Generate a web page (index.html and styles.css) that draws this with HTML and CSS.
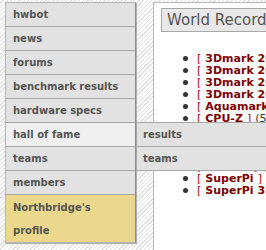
FILE: index.html
```html
<!DOCTYPE html>
<html>
<head>
<meta charset="utf-8">
<link rel="stylesheet" href="styles.css">
</head>
<body>
<div class="page">
  <nav class="menu">
    <a class="item">hwbot</a>
    <a class="item">news</a>
    <a class="item">forums</a>
    <a class="item">benchmark results</a>
    <a class="item">hardware specs</a>
    <div class="item active">hall of fame
      <div class="submenu">
        <a class="subitem">results</a>
        <a class="subitem">teams</a>
      </div>
    </div>
    <a class="item">teams</a>
    <a class="item">members</a>
    <a class="item profile">Northbridge's profile</a>
  </nav>
  <main class="panel">
    <h1 class="title">World Records</h1>
    <ul class="records">
      <li><span class="br">[</span> <a>3Dmark 2001</a> <span class="br">]</span> <span class="count">(5)</span></li>
      <li><span class="br">[</span> <a>3Dmark 2003</a> <span class="br">]</span> <span class="count">(5)</span></li>
      <li><span class="br">[</span> <a>3Dmark 2005</a> <span class="br">]</span> <span class="count">(5)</span></li>
      <li><span class="br">[</span> <a>3Dmark 2006</a> <span class="br">]</span> <span class="count">(5)</span></li>
      <li><span class="br">[</span> <a>Aquamark</a> <span class="br">]</span> <span class="count">(5)</span></li>
      <li><span class="br">[</span> <a>CPU-Z</a> <span class="br">]</span> <span class="count">(5)</span></li>
      <li><span class="br">[</span> <a>PCMark04</a> <span class="br">]</span> <span class="count">(5)</span></li>
      <li><span class="br">[</span> <a>PCMark05</a> <span class="br">]</span> <span class="count">(5)</span></li>
      <li><span class="br">[</span> <a>PiFast</a> <span class="br">]</span> <span class="count">(5)</span></li>
      <li><span class="br">[</span> <a>Sandra</a> <span class="br">]</span> <span class="count">(5)</span></li>
      <li><span class="br">[</span> <a>SuperPi</a> <span class="br">]</span> <span class="count">(5)</span></li>
      <li><span class="br">[</span> <a>SuperPi 32M</a> <span class="br">]</span> <span class="count">(5)</span></li>
    </ul>
  </main>
</div>
</body>
</html>
```
FILE: styles.css
```css
html, body {
  margin: 0;
  padding: 0;
}
body {
  width: 266px;
  height: 250px;
  overflow: hidden;
  background-color: #ffffff;
  background-image: repeating-linear-gradient(135deg, #ffffff 0px, #ffffff 2px, #e0e0e0 2px, #e0e0e0 3px);
  font-family: "DejaVu Sans", Verdana, sans-serif;
}
.page {
  display: flex;
  align-items: flex-start;
  padding: 2px 0 0 5px;
  gap: 17px;
  height: 248px;
}
.menu {
  flex: none;
  width: 129px;
  display: flex;
  flex-direction: column;
  border: 1px solid #b4b4b4;
  border-right: 1px solid #8c8c8c;
  box-shadow: 1px 1px 0 #b0b0b0;
  background: #e2e2e2;
}
.item {
  position: relative;
  display: block;
  height: 23px;
  line-height: 24px;
  padding-left: 7px;
  border-bottom: 1px solid #a8a8a8;
  font-size: 10px;
  font-weight: bold;
  color: #555555;
  white-space: nowrap;
}
.item.active {
  background: #f0f0f0;
}
.item.profile {
  height: auto;
  white-space: normal;
  border-bottom: none;
  background: #ecd88c;
  padding-right: 30px;
  padding-top: 1px;
  line-height: 23px;
}
.submenu {
  position: absolute;
  left: 130px;
  top: -1px;
  width: 140px;
  display: flex;
  flex-direction: column;
  background: #e2e2e2;
  border-top: 1px solid #a8a8a8;
  border-left: 1px solid #a8a8a8;
}
.subitem {
  display: block;
  height: 23px;
  line-height: 24px;
  padding-left: 6px;
  border-bottom: 1px solid #a8a8a8;
  font-size: 10px;
  font-weight: bold;
  color: #555555;
}
.panel {
  flex: 1;
  min-width: 200px;
  height: 260px;
  background: #ffffff;
  border: 1px solid #b8b8b8;
  padding: 5px 0 0 7px;
}
.title {
  margin: 0;
  height: 22px;
  line-height: 23px;
  background: #e8e8e8;
  border: 1px solid #a8a8a8;
  padding-left: 5px;
  font-size: 15px;
  font-weight: normal;
  color: #555555;
  white-space: nowrap;
  width: 200px;
}
.records {
  list-style: none;
  margin: 20px 0 0 0;
  padding: 0 0 0 22px;
}
.records li {
  display: flex;
  align-items: center;
  height: 12px;
  font-size: 11px;
  font-weight: bold;
  white-space: nowrap;
  color: #333;
}
.records li::before {
  content: "";
  flex: none;
  width: 5px;
  height: 5px;
  border-radius: 50%;
  background: #333333;
  margin-right: 9px;
}
.br {
  color: #c00000;
  font-weight: normal;
  margin-right: 4px;
}
.records a {
  color: #800000;
  margin-right: 4px;
}
.count {
  font-weight: normal;
  color: #333;
}
```
